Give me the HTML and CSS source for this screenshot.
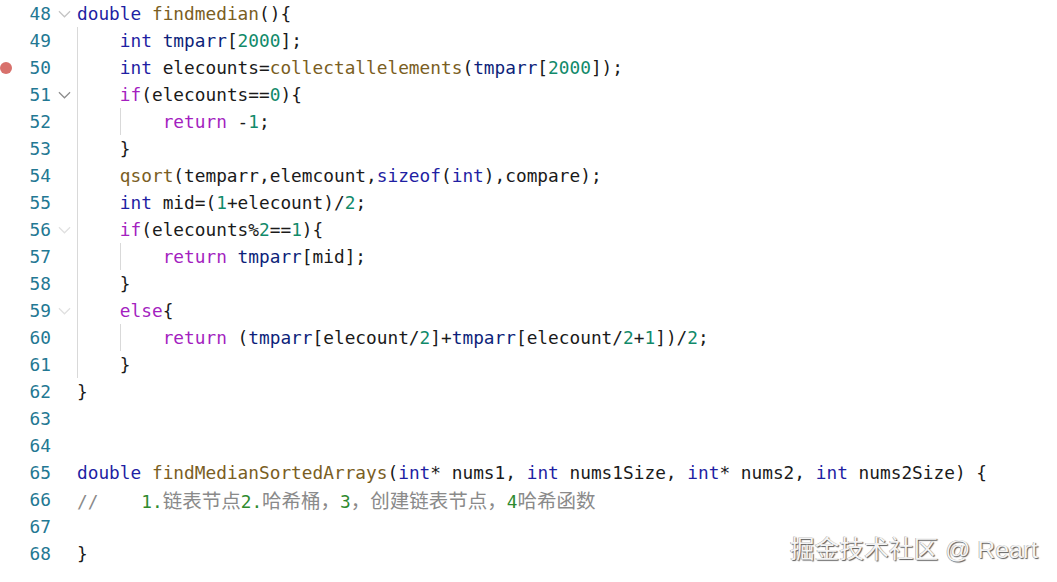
FILE: index.html
```html
<!DOCTYPE html>
<html lang="zh-CN">
<head>
<meta charset="utf-8">
<title>editor</title>
<link rel="stylesheet" href="styles.css">
</head>
<body>
<div class="editor">
  <div class="line"><span class="gut"><span class="bp none"></span><span class="ln">48</span><span class="fold"><svg viewBox="0 0 14 8"><polyline points="1,1 7,7 13,1"/></svg></span></span><span class="code"><span class="kw">double</span> <span class="fn">findmedian</span>(){</span></div>
  <div class="line"><span class="gut"><span class="bp none"></span><span class="ln">49</span><span class="fold"></span></span><span class="code"><span class="ind"></span><span class="kw">int</span> <span class="var">tmparr</span>[<span class="num">2000</span>];</span></div>
  <div class="line"><span class="gut"><span class="bp"></span><span class="ln">50</span><span class="fold"></span></span><span class="code"><span class="ind"></span><span class="kw">int</span> elecounts=<span class="fn">collectallelements</span>(<span class="var">tmparr</span>[<span class="num">2000</span>]);</span></div>
  <div class="line"><span class="gut"><span class="bp none"></span><span class="ln">51</span><span class="fold dark"><svg viewBox="0 0 14 8"><polyline points="1,1 7,7 13,1"/></svg></span></span><span class="code"><span class="ind"></span><span class="ctl">if</span>(elecounts==<span class="num">0</span>){</span></div>
  <div class="line"><span class="gut"><span class="bp none"></span><span class="ln">52</span><span class="fold"></span></span><span class="code"><span class="ind"></span><span class="ind"></span><span class="ctl">return</span> -<span class="num">1</span>;</span></div>
  <div class="line"><span class="gut"><span class="bp none"></span><span class="ln">53</span><span class="fold"></span></span><span class="code"><span class="ind"></span>}</span></div>
  <div class="line"><span class="gut"><span class="bp none"></span><span class="ln">54</span><span class="fold"></span></span><span class="code"><span class="ind"></span><span class="fn">qsort</span>(temparr,elemcount,<span class="kw">sizeof</span>(<span class="kw">int</span>),compare);</span></div>
  <div class="line"><span class="gut"><span class="bp none"></span><span class="ln">55</span><span class="fold"></span></span><span class="code"><span class="ind"></span><span class="kw">int</span> mid=(<span class="num">1</span>+elecount)/<span class="num">2</span>;</span></div>
  <div class="line"><span class="gut"><span class="bp none"></span><span class="ln">56</span><span class="fold faint"><svg viewBox="0 0 14 8"><polyline points="1,1 7,7 13,1"/></svg></span></span><span class="code"><span class="ind"></span><span class="ctl">if</span>(elecounts%<span class="num">2</span>==<span class="num">1</span>){</span></div>
  <div class="line"><span class="gut"><span class="bp none"></span><span class="ln">57</span><span class="fold"></span></span><span class="code"><span class="ind"></span><span class="ind"></span><span class="ctl">return</span> <span class="var">tmparr</span>[mid];</span></div>
  <div class="line"><span class="gut"><span class="bp none"></span><span class="ln">58</span><span class="fold"></span></span><span class="code"><span class="ind"></span>}</span></div>
  <div class="line"><span class="gut"><span class="bp none"></span><span class="ln">59</span><span class="fold faint"><svg viewBox="0 0 14 8"><polyline points="1,1 7,7 13,1"/></svg></span></span><span class="code"><span class="ind"></span><span class="ctl">else</span>{</span></div>
  <div class="line"><span class="gut"><span class="bp none"></span><span class="ln">60</span><span class="fold"></span></span><span class="code"><span class="ind"></span><span class="ind"></span><span class="ctl">return</span> (<span class="var">tmparr</span>[elecount/<span class="num">2</span>]+<span class="var">tmparr</span>[elecount/<span class="num">2</span>+<span class="num">1</span>])/<span class="num">2</span>;</span></div>
  <div class="line"><span class="gut"><span class="bp none"></span><span class="ln">61</span><span class="fold"></span></span><span class="code"><span class="ind"></span>}</span></div>
  <div class="line"><span class="gut"><span class="bp none"></span><span class="ln">62</span><span class="fold"></span></span><span class="code">}</span></div>
  <div class="line"><span class="gut"><span class="bp none"></span><span class="ln">63</span><span class="fold"></span></span><span class="code"></span></div>
  <div class="line"><span class="gut"><span class="bp none"></span><span class="ln">64</span><span class="fold"></span></span><span class="code"></span></div>
  <div class="line"><span class="gut"><span class="bp none"></span><span class="ln">65</span><span class="fold"></span></span><span class="code"><span class="kw">double</span> <span class="fn">findMedianSortedArrays</span>(<span class="kw">int</span>* nums1, <span class="kw">int</span> nums1Size, <span class="kw">int</span>* nums2, <span class="kw">int</span> nums2Size) {</span></div>
  <div class="line"><span class="gut"><span class="bp none"></span><span class="ln">66</span><span class="fold"></span></span><span class="code"><span class="cm">//    <span class="cmn">1.</span><span class="cjk">链表节点</span><span class="cmn">2.</span><span class="cjk">哈希桶，</span><span class="cmn">3</span><span class="cjk">，创建链表节点，</span><span class="cmn">4</span><span class="cjk">哈希函数</span></span></span></div>
  <div class="line"><span class="gut"><span class="bp none"></span><span class="ln">67</span><span class="fold"></span></span><span class="code"></span></div>
  <div class="line"><span class="gut"><span class="bp none"></span><span class="ln">68</span><span class="fold"></span></span><span class="code">}</span></div>
  <div class="watermark">掘金技术社区 @ Reart</div>
</div>
</body>
</html>
```
FILE: styles.css
```css
html, body {
  margin: 0;
  padding: 0;
  background: #ffffff;
}
.editor {
  position: relative;
  width: 1057px;
  height: 582px;
  overflow: hidden;
  font-family: "DejaVu Sans Mono", "Noto Sans CJK SC", monospace;
  font-size: 17.8px;
  color: #1a1a1a;
}
.line {
  display: flex;
  height: 27px;
  line-height: 27px;
  white-space: pre;
}
.gut {
  display: flex;
  align-items: center;
  width: 77px;
  flex: none;
}
.bp {
  width: 12px;
  height: 12px;
  border-radius: 50%;
  background: #d8716c;
  flex: none;
}
.bp.none {
  background: transparent;
}
.ln {
  width: 39px;
  text-align: right;
  color: #237893;
  flex: none;
}
.fold {
  display: flex;
  align-items: center;
  justify-content: center;
  width: 26px;
  height: 27px;
  flex: none;
}
.fold svg {
  width: 13px;
  height: 8px;
  fill: none;
  stroke: #c4c4c4;
  stroke-width: 1.3;
}
.fold.dark svg {
  stroke: #8c8c8c;
}
.fold.faint svg {
  stroke: #e0e0e0;
}
.code {
  display: block;
  flex: 1;
  height: 27px;
}
.ind {
  display: inline-block;
  width: 4ch;
  height: 27px;
  vertical-align: top;
  box-shadow: inset 1px 0 0 #d9d9d9;
}
.kw { color: #1f1fa3; }
.ctl { color: #a41fbf; }
.fn { color: #7a5e23; }
.var { color: #0d1f7a; }
.num { color: #118a6a; }
.cm {
  color: #8a8a8a;
}
.cjk {
  font-family: "Noto Sans CJK SC", sans-serif;
  font-size: 19.5px;
  color: #8a8a8a;
}
.cmn { color: #2e8a2e; }
.watermark {
  position: absolute;
  right: 19px;
  bottom: 18px;
  font-family: "Liberation Sans", "Noto Sans CJK SC", sans-serif;
  font-size: 24.8px;
  line-height: 28px;
  color: #f4f4f4;
  text-shadow: 1px 1px 1px #5a5a5a, -0.5px -0.5px 0.5px #9a9a9a;
  white-space: nowrap;
}
```
